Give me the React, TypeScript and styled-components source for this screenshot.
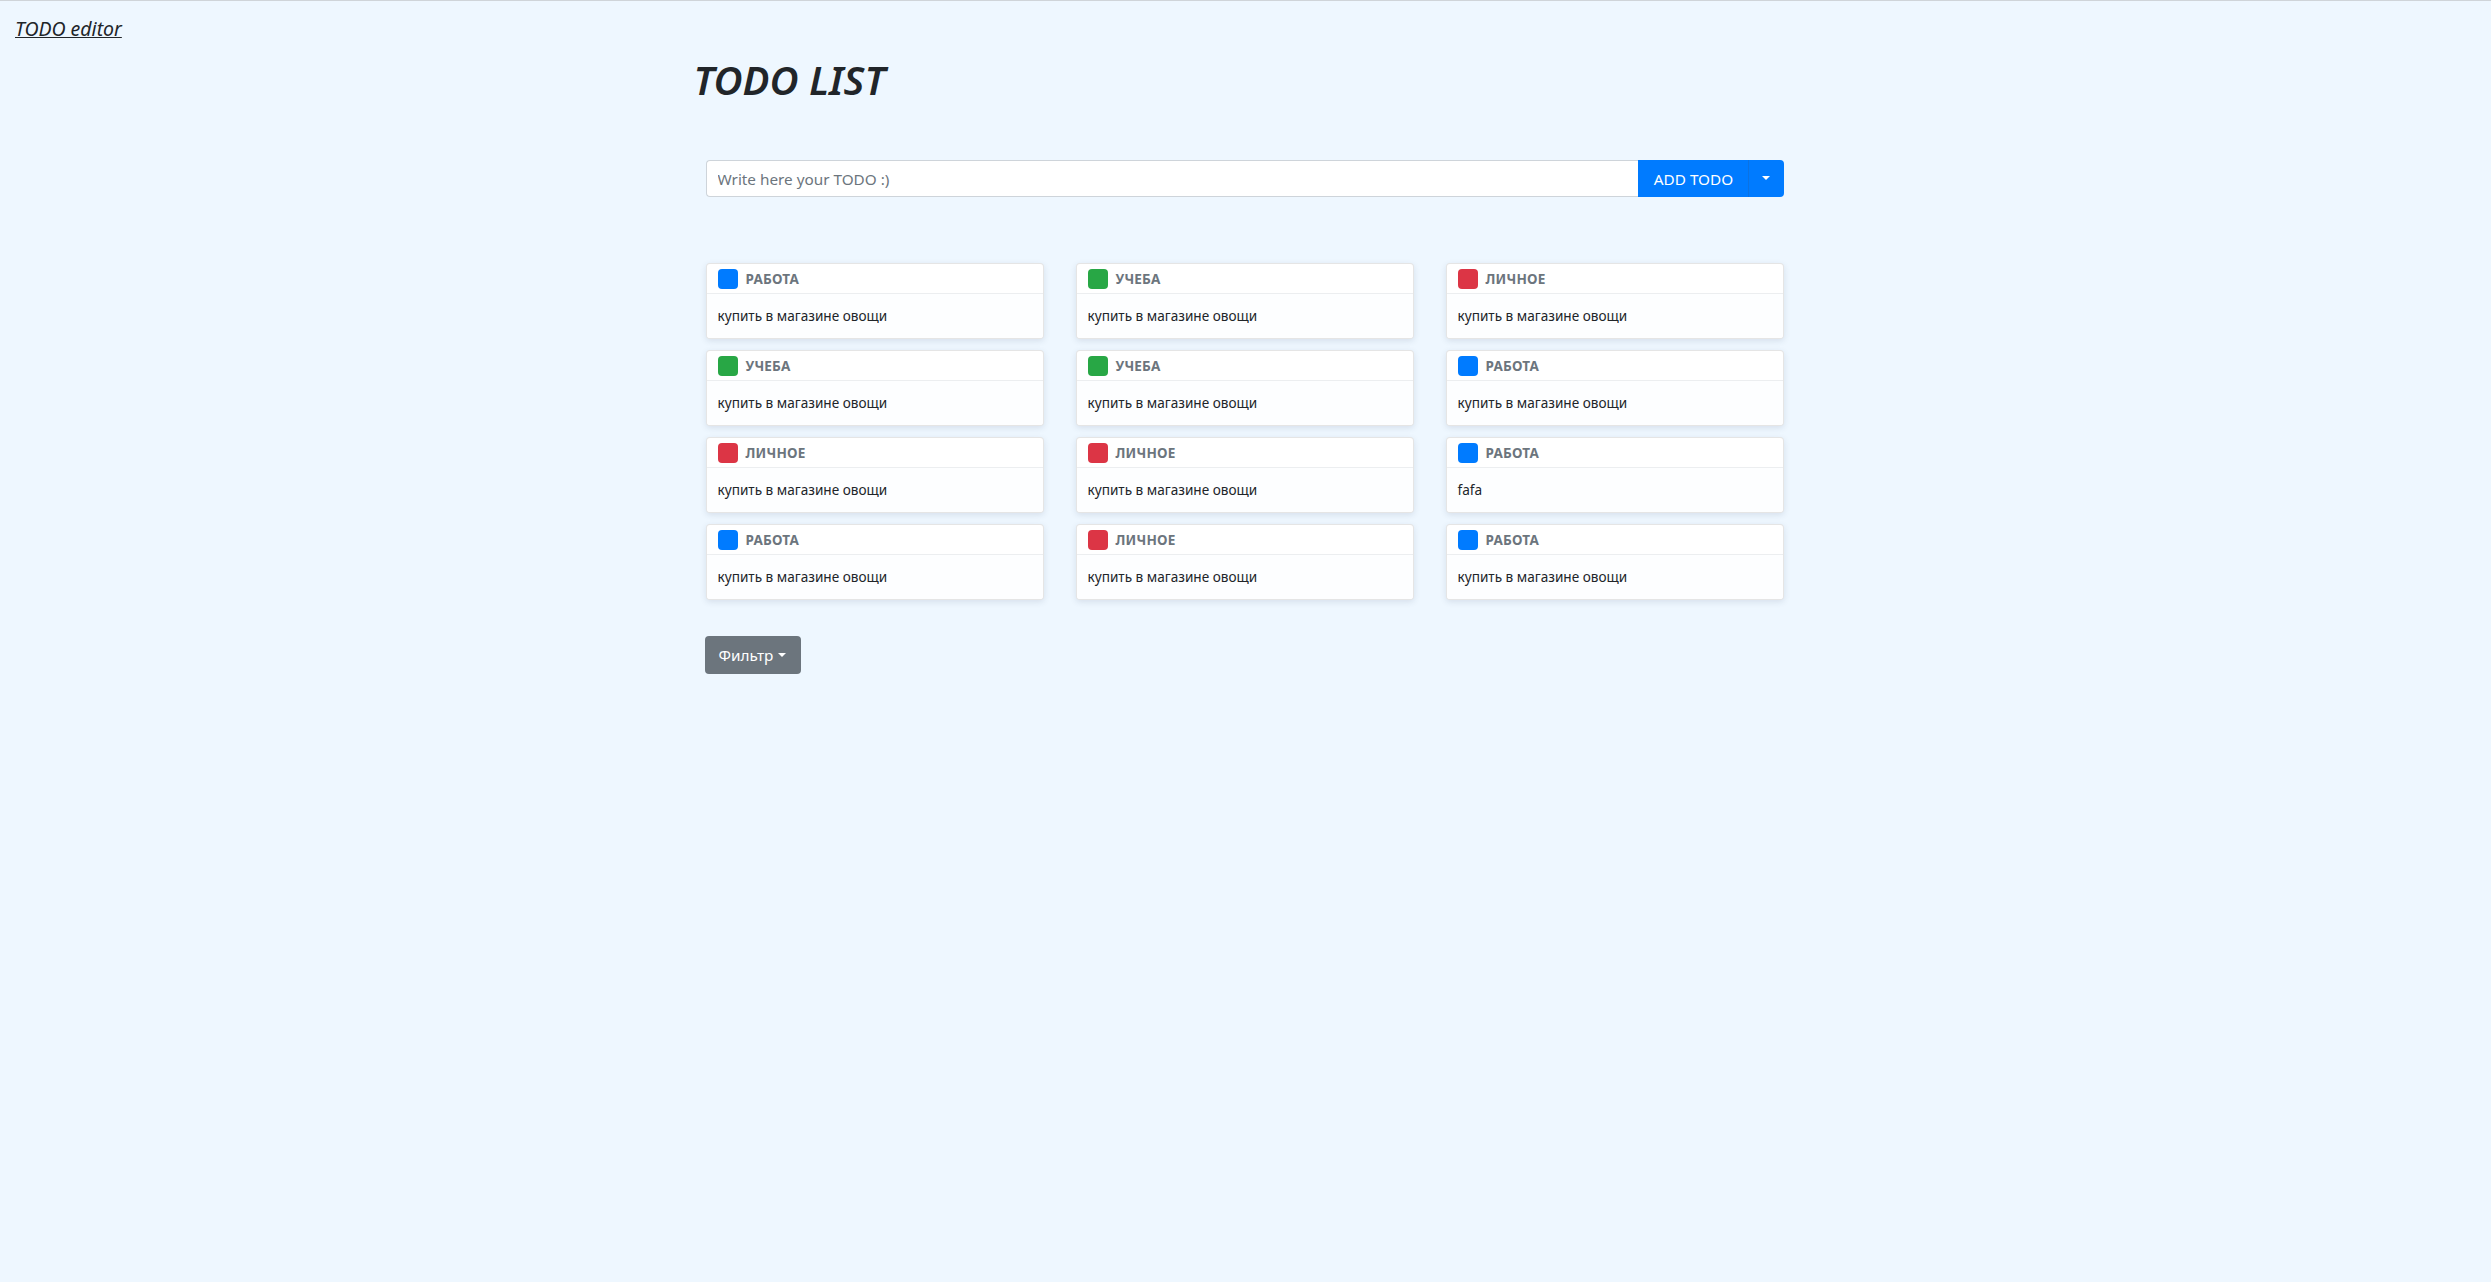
import React from "react";
import styled, { createGlobalStyle } from "styled-components";

const GlobalStyle = createGlobalStyle`
  html, body {
    margin: 0;
    padding: 0;
  }
  body {
    background: #eef7ff;
    border-top: 1px solid #cfd4d9;
    font-family: "Noto Sans", "Open Sans", sans-serif;
    color: #212529;
    min-height: 1281px;
  }
`;

const TopBar = styled.div`
  padding: 14px 15px 0;
  height: 27px;
`;

const EditorLink = styled.a`
  font-size: 19.5px;
  font-style: italic;
  color: #212529;
  text-decoration: underline;
  cursor: pointer;
`;

const Container = styled.div`
  width: 1140px;
  margin: 0 auto;
  padding: 0 15px;
  box-sizing: border-box;
`;

const Title = styled.h1`
  margin: 14px 0 0 3px;
  font-size: 40px;
  line-height: 48px;
  font-style: italic;
  font-weight: 600;
  letter-spacing: 0;
`;

const InputGroup = styled.div`
  display: flex;
  margin: 56px 0 0 15px;
  width: 1078px;
  height: 37px;
`;

const TodoInput = styled.input`
  flex: 1;
  border: 1px solid #ced4da;
  border-right: none;
  border-radius: 4px 0 0 4px;
  padding: 0 11px;
  font-family: inherit;
  font-size: 15.3px;
  color: #495057;
  background: #fff;
  outline: none;
  &::placeholder {
    color: #6c757d;
  }
`;

const Caret = styled.span`
  display: inline-block;
  width: 0;
  height: 0;
  border-top: 4px solid #fff;
  border-left: 4px solid transparent;
  border-right: 4px solid transparent;
  vertical-align: middle;
`;

const AddButton = styled.button`
  width: 110px;
  border: none;
  background: #007bff;
  color: #fff;
  font-family: inherit;
  font-size: 15.3px;
  padding: 0 0 0 2px;
`;

const AddToggle = styled.button`
  width: 36px;
  border: none;
  border-left: 1px solid #0b72e2;
  border-radius: 0 4px 4px 0;
  background: #007bff;
  padding: 0 0 2px;
  display: flex;
  align-items: center;
  justify-content: center;
`;

const Grid = styled.div`
  display: grid;
  grid-template-columns: repeat(3, 338px);
  column-gap: 32px;
  row-gap: 11px;
  margin: 66px 0 0 15px;
`;

const Card = styled.div`
  background: #fff;
  border: 1px solid rgba(0, 0, 0, 0.1);
  border-radius: 4px;
  box-shadow: 0 2px 6px rgba(40, 60, 90, 0.12);
  height: 74px;
  display: flex;
  flex-direction: column;
  overflow: hidden;
`;

const CardHeader = styled.div`
  height: 29px;
  display: flex;
  align-items: center;
  gap: 8px;
  padding: 0 11px;
  border-bottom: 1px solid #eceef0;
`;

const Swatch = styled.span<{ $color: string }>`
  width: 20px;
  height: 20px;
  border-radius: 4px;
  background: ${(p) => p.$color};
`;

const Label = styled.span`
  font-size: 13.5px;
  font-weight: 700;
  color: #6c757d;
  letter-spacing: 0.2px;
`;

const CardBody = styled.div`
  flex: 1;
  display: flex;
  align-items: center;
  padding: 0 11px 2px;
  font-size: 13.6px;
  background: #fdfeff;
`;

const FilterButton = styled.button`
  margin: 36px 0 0 14px;
  width: 96px;
  height: 38px;
  border: none;
  border-radius: 4px;
  background: #6c757d;
  color: #fff;
  font-family: inherit;
  font-size: 15.3px;
  display: flex;
  align-items: center;
  justify-content: center;
  gap: 5px;
`;

const categories: Record<string, string> = {
  "РАБОТА": "#007bff",
  "УЧЕБА": "#28a745",
  "ЛИЧНОЕ": "#dc3545",
};

const text = "купить в магазине овощи";

const todos = [
  { cat: "РАБОТА", text },
  { cat: "УЧЕБА", text },
  { cat: "ЛИЧНОЕ", text },
  { cat: "УЧЕБА", text },
  { cat: "УЧЕБА", text },
  { cat: "РАБОТА", text },
  { cat: "ЛИЧНОЕ", text },
  { cat: "ЛИЧНОЕ", text },
  { cat: "РАБОТА", text: "fafa" },
  { cat: "РАБОТА", text },
  { cat: "ЛИЧНОЕ", text },
  { cat: "РАБОТА", text },
];

const App = () => {
  return (
    <>
      <GlobalStyle />
      <TopBar>
        <EditorLink>TODO editor</EditorLink>
      </TopBar>
      <Container>
        <Title>TODO LIST</Title>
        <InputGroup>
          <TodoInput placeholder="Write here your TODO :)" />
          <AddButton>ADD TODO</AddButton>
          <AddToggle>
            <Caret />
          </AddToggle>
        </InputGroup>
        <Grid>
          {todos.map((t, i) => (
            <Card key={i}>
              <CardHeader>
                <Swatch $color={categories[t.cat]} />
                <Label>{t.cat}</Label>
              </CardHeader>
              <CardBody>{t.text}</CardBody>
            </Card>
          ))}
        </Grid>
        <FilterButton>
          Фильтр <Caret />
        </FilterButton>
      </Container>
    </>
  );
};

export default App;
